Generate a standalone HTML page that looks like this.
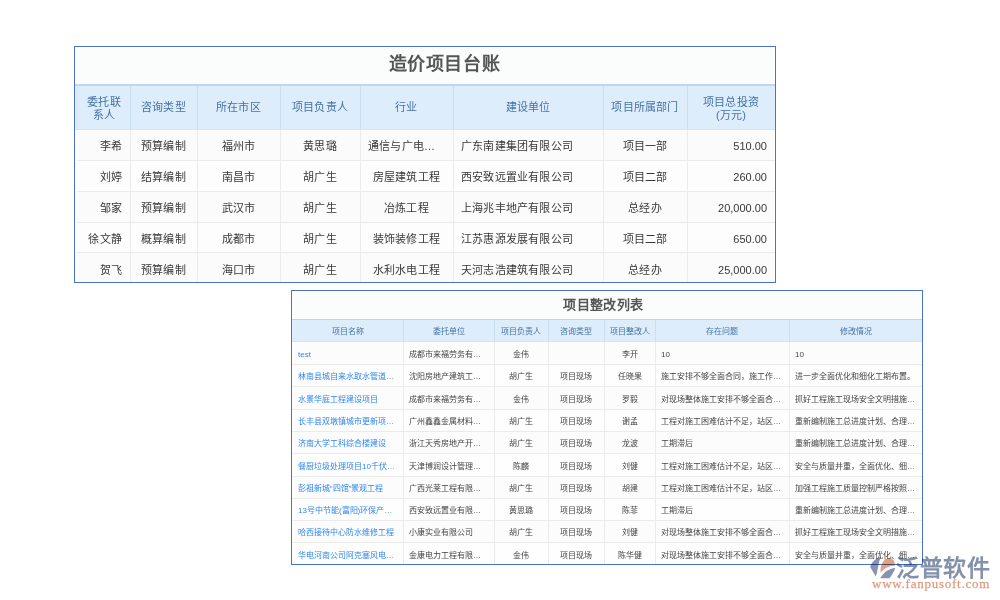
<!DOCTYPE html>
<html lang="zh-CN"><head><meta charset="utf-8"><style>
html,body{margin:0;padding:0;background:#ffffff;width:1000px;height:600px;overflow:hidden;position:relative}
body div{position:absolute}
.t{font-family:"Liberation Sans",sans-serif;white-space:nowrap;overflow:hidden}
</style></head><body>
<div style="left:74px;top:46px;width:702px;height:237px;background:#4a72c8;"></div>
<div style="left:75px;top:47px;width:700px;height:235px;background:#ffffff;"></div>
<div style="left:76px;top:48px;width:698px;height:36px;background:#fbfcfc;"></div>
<div style="left:75px;top:84px;width:700px;height:2px;background:#bcd9f0;"></div>
<div style="left:75px;top:86px;width:700px;height:43px;background:#deedfb;"></div>
<div style="left:75px;top:129px;width:700px;height:1px;background:#d3e4f2;"></div>
<div style="left:76px;top:131px;width:698px;height:29px;background:#fbfbfb;"></div>
<div style="left:76px;top:161px;width:698px;height:30px;background:#fdfdfd;"></div>
<div style="left:76px;top:192px;width:698px;height:30px;background:#fbfbfb;"></div>
<div style="left:76px;top:223px;width:698px;height:29px;background:#fdfdfd;"></div>
<div style="left:76px;top:253px;width:698px;height:29px;background:#fbfbfb;"></div>
<div style="left:75px;top:160px;width:700px;height:1px;background:#ebebeb;"></div>
<div style="left:75px;top:191px;width:700px;height:1px;background:#ebebeb;"></div>
<div style="left:75px;top:222px;width:700px;height:1px;background:#ebebeb;"></div>
<div style="left:75px;top:252px;width:700px;height:1px;background:#ebebeb;"></div>
<div style="left:77px;top:86px;width:1px;height:43px;background:#d3e6f6;"></div>
<div style="left:75px;top:130px;width:2px;height:152px;background:#ffffff;"></div>
<div style="left:130px;top:86px;width:1px;height:43px;background:#c9dff0;"></div>
<div style="left:130px;top:130px;width:1px;height:152px;background:#ebebeb;"></div>
<div style="left:197px;top:86px;width:1px;height:43px;background:#c9dff0;"></div>
<div style="left:197px;top:130px;width:1px;height:152px;background:#ebebeb;"></div>
<div style="left:280px;top:86px;width:1px;height:43px;background:#c9dff0;"></div>
<div style="left:280px;top:130px;width:1px;height:152px;background:#ebebeb;"></div>
<div style="left:360px;top:86px;width:1px;height:43px;background:#c9dff0;"></div>
<div style="left:360px;top:130px;width:1px;height:152px;background:#ebebeb;"></div>
<div style="left:453px;top:86px;width:1px;height:43px;background:#c9dff0;"></div>
<div style="left:453px;top:130px;width:1px;height:152px;background:#ebebeb;"></div>
<div style="left:603px;top:86px;width:1px;height:43px;background:#c9dff0;"></div>
<div style="left:603px;top:130px;width:1px;height:152px;background:#ebebeb;"></div>
<div style="left:687px;top:86px;width:1px;height:43px;background:#c9dff0;"></div>
<div style="left:687px;top:130px;width:1px;height:152px;background:#ebebeb;"></div>
<div class="t" style="left:74px;top:46px;width:701px;height:36px;line-height:36px;font-size:18px;color:#555555;text-align:center;font-weight:bold;padding-left:40px;box-sizing:border-box;letter-spacing:0.6px;">造价项目台账</div>
<div class="t" style="left:78px;top:86px;width:52px;height:43px;font-size:11px;color:#4572a4;text-align:center;line-height:13.5px;padding-top:9.5px;letter-spacing:0.2px;box-sizing:border-box;white-space:normal">委托联<br>系人</div>
<div class="t" style="left:130px;top:86px;width:67px;height:43px;line-height:43px;font-size:11px;color:#4572a4;text-align:center;font-weight:normal;letter-spacing:0.2px;">咨询类型</div>
<div class="t" style="left:197px;top:86px;width:83px;height:43px;line-height:43px;font-size:11px;color:#4572a4;text-align:center;font-weight:normal;letter-spacing:0.2px;">所在市区</div>
<div class="t" style="left:280px;top:86px;width:80px;height:43px;line-height:43px;font-size:11px;color:#4572a4;text-align:center;font-weight:normal;letter-spacing:0.2px;">项目负责人</div>
<div class="t" style="left:360px;top:86px;width:93px;height:43px;line-height:43px;font-size:11px;color:#4572a4;text-align:center;font-weight:normal;letter-spacing:0.2px;">行业</div>
<div class="t" style="left:453px;top:86px;width:150px;height:43px;line-height:43px;font-size:11px;color:#4572a4;text-align:center;font-weight:normal;letter-spacing:0.2px;">建设单位</div>
<div class="t" style="left:603px;top:86px;width:84px;height:43px;line-height:43px;font-size:11px;color:#4572a4;text-align:center;font-weight:normal;letter-spacing:0.2px;">项目所属部门</div>
<div class="t" style="left:687px;top:86px;width:88px;height:43px;font-size:11px;color:#4572a4;text-align:center;line-height:13.5px;padding-top:9.5px;letter-spacing:0.2px;box-sizing:border-box;white-space:normal">项目总投资<br>(万元)</div>
<div class="t" style="left:75px;top:131px;width:55px;height:31px;line-height:31px;font-size:11px;color:#383838;text-align:right;font-weight:normal;padding:0 8px;box-sizing:border-box;letter-spacing:0.2px;">李希</div>
<div class="t" style="left:130px;top:131px;width:67px;height:31px;line-height:31px;font-size:11px;color:#383838;text-align:center;font-weight:normal;padding:0 8px;box-sizing:border-box;letter-spacing:0.2px;">预算编制</div>
<div class="t" style="left:197px;top:131px;width:83px;height:31px;line-height:31px;font-size:11px;color:#383838;text-align:center;font-weight:normal;padding:0 8px;box-sizing:border-box;letter-spacing:0.2px;">福州市</div>
<div class="t" style="left:280px;top:131px;width:80px;height:31px;line-height:31px;font-size:11px;color:#383838;text-align:center;font-weight:normal;padding:0 8px;box-sizing:border-box;letter-spacing:0.2px;">黄思璐</div>
<div class="t" style="left:360px;top:131px;width:93px;height:31px;line-height:31px;font-size:11px;color:#383838;text-align:left;font-weight:normal;padding:0 8px;box-sizing:border-box;letter-spacing:0.2px;">通信与广电…</div>
<div class="t" style="left:453px;top:131px;width:150px;height:31px;line-height:31px;font-size:11px;color:#383838;text-align:left;font-weight:normal;padding:0 8px;box-sizing:border-box;letter-spacing:0.2px;">广东南建集团有限公司</div>
<div class="t" style="left:603px;top:131px;width:84px;height:31px;line-height:31px;font-size:11px;color:#383838;text-align:center;font-weight:normal;padding:0 8px;box-sizing:border-box;letter-spacing:0.2px;">项目一部</div>
<div class="t" style="left:687px;top:131px;width:88px;height:31px;line-height:31px;font-size:11px;color:#383838;text-align:right;font-weight:normal;padding:0 8px;box-sizing:border-box;">510.00</div>
<div class="t" style="left:75px;top:162px;width:55px;height:31px;line-height:31px;font-size:11px;color:#383838;text-align:right;font-weight:normal;padding:0 8px;box-sizing:border-box;letter-spacing:0.2px;">刘婷</div>
<div class="t" style="left:130px;top:162px;width:67px;height:31px;line-height:31px;font-size:11px;color:#383838;text-align:center;font-weight:normal;padding:0 8px;box-sizing:border-box;letter-spacing:0.2px;">结算编制</div>
<div class="t" style="left:197px;top:162px;width:83px;height:31px;line-height:31px;font-size:11px;color:#383838;text-align:center;font-weight:normal;padding:0 8px;box-sizing:border-box;letter-spacing:0.2px;">南昌市</div>
<div class="t" style="left:280px;top:162px;width:80px;height:31px;line-height:31px;font-size:11px;color:#383838;text-align:center;font-weight:normal;padding:0 8px;box-sizing:border-box;letter-spacing:0.2px;">胡广生</div>
<div class="t" style="left:360px;top:162px;width:93px;height:31px;line-height:31px;font-size:11px;color:#383838;text-align:center;font-weight:normal;padding:0 8px;box-sizing:border-box;letter-spacing:0.2px;">房屋建筑工程</div>
<div class="t" style="left:453px;top:162px;width:150px;height:31px;line-height:31px;font-size:11px;color:#383838;text-align:left;font-weight:normal;padding:0 8px;box-sizing:border-box;letter-spacing:0.2px;">西安致远置业有限公司</div>
<div class="t" style="left:603px;top:162px;width:84px;height:31px;line-height:31px;font-size:11px;color:#383838;text-align:center;font-weight:normal;padding:0 8px;box-sizing:border-box;letter-spacing:0.2px;">项目二部</div>
<div class="t" style="left:687px;top:162px;width:88px;height:31px;line-height:31px;font-size:11px;color:#383838;text-align:right;font-weight:normal;padding:0 8px;box-sizing:border-box;">260.00</div>
<div class="t" style="left:75px;top:193px;width:55px;height:31px;line-height:31px;font-size:11px;color:#383838;text-align:right;font-weight:normal;padding:0 8px;box-sizing:border-box;letter-spacing:0.2px;">邹家</div>
<div class="t" style="left:130px;top:193px;width:67px;height:31px;line-height:31px;font-size:11px;color:#383838;text-align:center;font-weight:normal;padding:0 8px;box-sizing:border-box;letter-spacing:0.2px;">预算编制</div>
<div class="t" style="left:197px;top:193px;width:83px;height:31px;line-height:31px;font-size:11px;color:#383838;text-align:center;font-weight:normal;padding:0 8px;box-sizing:border-box;letter-spacing:0.2px;">武汉市</div>
<div class="t" style="left:280px;top:193px;width:80px;height:31px;line-height:31px;font-size:11px;color:#383838;text-align:center;font-weight:normal;padding:0 8px;box-sizing:border-box;letter-spacing:0.2px;">胡广生</div>
<div class="t" style="left:360px;top:193px;width:93px;height:31px;line-height:31px;font-size:11px;color:#383838;text-align:center;font-weight:normal;padding:0 8px;box-sizing:border-box;letter-spacing:0.2px;">冶炼工程</div>
<div class="t" style="left:453px;top:193px;width:150px;height:31px;line-height:31px;font-size:11px;color:#383838;text-align:left;font-weight:normal;padding:0 8px;box-sizing:border-box;letter-spacing:0.2px;">上海兆丰地产有限公司</div>
<div class="t" style="left:603px;top:193px;width:84px;height:31px;line-height:31px;font-size:11px;color:#383838;text-align:center;font-weight:normal;padding:0 8px;box-sizing:border-box;letter-spacing:0.2px;">总经办</div>
<div class="t" style="left:687px;top:193px;width:88px;height:31px;line-height:31px;font-size:11px;color:#383838;text-align:right;font-weight:normal;padding:0 8px;box-sizing:border-box;">20,000.00</div>
<div class="t" style="left:75px;top:224px;width:55px;height:31px;line-height:31px;font-size:11px;color:#383838;text-align:right;font-weight:normal;padding:0 8px;box-sizing:border-box;letter-spacing:0.2px;">徐文静</div>
<div class="t" style="left:130px;top:224px;width:67px;height:31px;line-height:31px;font-size:11px;color:#383838;text-align:center;font-weight:normal;padding:0 8px;box-sizing:border-box;letter-spacing:0.2px;">概算编制</div>
<div class="t" style="left:197px;top:224px;width:83px;height:31px;line-height:31px;font-size:11px;color:#383838;text-align:center;font-weight:normal;padding:0 8px;box-sizing:border-box;letter-spacing:0.2px;">成都市</div>
<div class="t" style="left:280px;top:224px;width:80px;height:31px;line-height:31px;font-size:11px;color:#383838;text-align:center;font-weight:normal;padding:0 8px;box-sizing:border-box;letter-spacing:0.2px;">胡广生</div>
<div class="t" style="left:360px;top:224px;width:93px;height:31px;line-height:31px;font-size:11px;color:#383838;text-align:center;font-weight:normal;padding:0 8px;box-sizing:border-box;letter-spacing:0.2px;">装饰装修工程</div>
<div class="t" style="left:453px;top:224px;width:150px;height:31px;line-height:31px;font-size:11px;color:#383838;text-align:left;font-weight:normal;padding:0 8px;box-sizing:border-box;letter-spacing:0.2px;">江苏惠源发展有限公司</div>
<div class="t" style="left:603px;top:224px;width:84px;height:31px;line-height:31px;font-size:11px;color:#383838;text-align:center;font-weight:normal;padding:0 8px;box-sizing:border-box;letter-spacing:0.2px;">项目二部</div>
<div class="t" style="left:687px;top:224px;width:88px;height:31px;line-height:31px;font-size:11px;color:#383838;text-align:right;font-weight:normal;padding:0 8px;box-sizing:border-box;">650.00</div>
<div class="t" style="left:75px;top:255px;width:55px;height:31px;line-height:31px;font-size:11px;color:#383838;text-align:right;font-weight:normal;padding:0 8px;box-sizing:border-box;letter-spacing:0.2px;">贺飞</div>
<div class="t" style="left:130px;top:255px;width:67px;height:31px;line-height:31px;font-size:11px;color:#383838;text-align:center;font-weight:normal;padding:0 8px;box-sizing:border-box;letter-spacing:0.2px;">预算编制</div>
<div class="t" style="left:197px;top:255px;width:83px;height:31px;line-height:31px;font-size:11px;color:#383838;text-align:center;font-weight:normal;padding:0 8px;box-sizing:border-box;letter-spacing:0.2px;">海口市</div>
<div class="t" style="left:280px;top:255px;width:80px;height:31px;line-height:31px;font-size:11px;color:#383838;text-align:center;font-weight:normal;padding:0 8px;box-sizing:border-box;letter-spacing:0.2px;">胡广生</div>
<div class="t" style="left:360px;top:255px;width:93px;height:31px;line-height:31px;font-size:11px;color:#383838;text-align:center;font-weight:normal;padding:0 8px;box-sizing:border-box;letter-spacing:0.2px;">水利水电工程</div>
<div class="t" style="left:453px;top:255px;width:150px;height:31px;line-height:31px;font-size:11px;color:#383838;text-align:left;font-weight:normal;padding:0 8px;box-sizing:border-box;letter-spacing:0.2px;">天河志浩建筑有限公司</div>
<div class="t" style="left:603px;top:255px;width:84px;height:31px;line-height:31px;font-size:11px;color:#383838;text-align:center;font-weight:normal;padding:0 8px;box-sizing:border-box;letter-spacing:0.2px;">总经办</div>
<div class="t" style="left:687px;top:255px;width:88px;height:31px;line-height:31px;font-size:11px;color:#383838;text-align:right;font-weight:normal;padding:0 8px;box-sizing:border-box;">25,000.00</div>
<div style="left:291px;top:290px;width:632px;height:275px;background:#4a72c8;"></div>
<div style="left:292px;top:291px;width:630px;height:273px;background:#ffffff;"></div>
<div style="left:293px;top:292px;width:628px;height:26px;background:#fbfcfc;"></div>
<div style="left:292px;top:319px;width:630px;height:1px;background:#b8d7f0;"></div>
<div style="left:292px;top:320px;width:630px;height:21px;background:#deedfb;"></div>
<div style="left:292px;top:341px;width:630px;height:1px;background:#d3e4f2;"></div>
<div style="left:293px;top:342px;width:628px;height:22px;background:#fcfcfc;"></div>
<div style="left:293px;top:365px;width:628px;height:21px;background:#fefefe;"></div>
<div style="left:293px;top:387px;width:628px;height:22px;background:#fcfcfc;"></div>
<div style="left:293px;top:410px;width:628px;height:21px;background:#fefefe;"></div>
<div style="left:293px;top:432px;width:628px;height:21px;background:#fcfcfc;"></div>
<div style="left:293px;top:454px;width:628px;height:22px;background:#fefefe;"></div>
<div style="left:293px;top:477px;width:628px;height:21px;background:#fcfcfc;"></div>
<div style="left:293px;top:499px;width:628px;height:21px;background:#fefefe;"></div>
<div style="left:293px;top:521px;width:628px;height:21px;background:#fcfcfc;"></div>
<div style="left:293px;top:543px;width:628px;height:21px;background:#fefefe;"></div>
<div style="left:292px;top:364px;width:630px;height:1px;background:#ebebeb;"></div>
<div style="left:292px;top:386px;width:630px;height:1px;background:#ebebeb;"></div>
<div style="left:292px;top:409px;width:630px;height:1px;background:#ebebeb;"></div>
<div style="left:292px;top:431px;width:630px;height:1px;background:#ebebeb;"></div>
<div style="left:292px;top:453px;width:630px;height:1px;background:#ebebeb;"></div>
<div style="left:292px;top:476px;width:630px;height:1px;background:#ebebeb;"></div>
<div style="left:292px;top:498px;width:630px;height:1px;background:#ebebeb;"></div>
<div style="left:292px;top:520px;width:630px;height:1px;background:#ebebeb;"></div>
<div style="left:292px;top:542px;width:630px;height:1px;background:#ebebeb;"></div>
<div style="left:403px;top:320px;width:1px;height:21px;background:#c9dff0;"></div>
<div style="left:403px;top:342px;width:1px;height:222px;background:#ebebeb;"></div>
<div style="left:494px;top:320px;width:1px;height:21px;background:#c9dff0;"></div>
<div style="left:494px;top:342px;width:1px;height:222px;background:#ebebeb;"></div>
<div style="left:548px;top:320px;width:1px;height:21px;background:#c9dff0;"></div>
<div style="left:548px;top:342px;width:1px;height:222px;background:#ebebeb;"></div>
<div style="left:604px;top:320px;width:1px;height:21px;background:#c9dff0;"></div>
<div style="left:604px;top:342px;width:1px;height:222px;background:#ebebeb;"></div>
<div style="left:655px;top:320px;width:1px;height:21px;background:#c9dff0;"></div>
<div style="left:655px;top:342px;width:1px;height:222px;background:#ebebeb;"></div>
<div style="left:789px;top:320px;width:1px;height:21px;background:#c9dff0;"></div>
<div style="left:789px;top:342px;width:1px;height:222px;background:#ebebeb;"></div>
<div class="t" style="left:288px;top:291px;width:631px;height:28px;line-height:28px;font-size:13px;color:#555555;text-align:center;font-weight:bold;letter-spacing:0.4px;">项目整改列表</div>
<div class="t" style="left:292px;top:321px;width:111px;height:21px;line-height:21px;font-size:8px;color:#4572a4;text-align:center;font-weight:normal;">项目名称</div>
<div class="t" style="left:403px;top:321px;width:91px;height:21px;line-height:21px;font-size:8px;color:#4572a4;text-align:center;font-weight:normal;">委托单位</div>
<div class="t" style="left:494px;top:321px;width:54px;height:21px;line-height:21px;font-size:8px;color:#4572a4;text-align:center;font-weight:normal;">项目负责人</div>
<div class="t" style="left:548px;top:321px;width:56px;height:21px;line-height:21px;font-size:8px;color:#4572a4;text-align:center;font-weight:normal;">咨询类型</div>
<div class="t" style="left:604px;top:321px;width:51px;height:21px;line-height:21px;font-size:8px;color:#4572a4;text-align:center;font-weight:normal;">项目整改人</div>
<div class="t" style="left:655px;top:321px;width:134px;height:21px;line-height:21px;font-size:8px;color:#4572a4;text-align:center;font-weight:normal;">存在问题</div>
<div class="t" style="left:789px;top:321px;width:133px;height:21px;line-height:21px;font-size:8px;color:#4572a4;text-align:center;font-weight:normal;">修改情况</div>
<div class="t" style="left:292px;top:344.0px;width:111px;height:22px;line-height:22px;font-size:8px;color:#2f87ee;text-align:left;font-weight:normal;padding:0 5px 0 6px;box-sizing:border-box;padding-left:6px;">test</div>
<div class="t" style="left:403px;top:344.0px;width:91px;height:22px;line-height:22px;font-size:8px;color:#444444;text-align:left;font-weight:normal;padding:0 5px 0 6px;box-sizing:border-box;">成都市来福劳务有…</div>
<div class="t" style="left:494px;top:344.0px;width:54px;height:22px;line-height:22px;font-size:8px;color:#444444;text-align:center;font-weight:normal;">金伟</div>
<div class="t" style="left:548px;top:344.0px;width:56px;height:22px;line-height:22px;font-size:8px;color:#444444;text-align:center;font-weight:normal;"></div>
<div class="t" style="left:604px;top:344.0px;width:51px;height:22px;line-height:22px;font-size:8px;color:#444444;text-align:center;font-weight:normal;">李开</div>
<div class="t" style="left:655px;top:344.0px;width:134px;height:22px;line-height:22px;font-size:8px;color:#444444;text-align:left;font-weight:normal;padding:0 5px 0 6px;box-sizing:border-box;">10</div>
<div class="t" style="left:789px;top:344.0px;width:133px;height:22px;line-height:22px;font-size:8px;color:#444444;text-align:left;font-weight:normal;padding:0 5px 0 6px;box-sizing:border-box;">10</div>
<div class="t" style="left:292px;top:366.3px;width:111px;height:22px;line-height:22px;font-size:8px;color:#2f87ee;text-align:left;font-weight:normal;padding:0 5px 0 6px;box-sizing:border-box;padding-left:6px;">林南县城自来水取水管道…</div>
<div class="t" style="left:403px;top:366.3px;width:91px;height:22px;line-height:22px;font-size:8px;color:#444444;text-align:left;font-weight:normal;padding:0 5px 0 6px;box-sizing:border-box;">沈阳房地产建筑工…</div>
<div class="t" style="left:494px;top:366.3px;width:54px;height:22px;line-height:22px;font-size:8px;color:#444444;text-align:center;font-weight:normal;">胡广生</div>
<div class="t" style="left:548px;top:366.3px;width:56px;height:22px;line-height:22px;font-size:8px;color:#444444;text-align:center;font-weight:normal;">项目现场</div>
<div class="t" style="left:604px;top:366.3px;width:51px;height:22px;line-height:22px;font-size:8px;color:#444444;text-align:center;font-weight:normal;">任晓果</div>
<div class="t" style="left:655px;top:366.3px;width:134px;height:22px;line-height:22px;font-size:8px;color:#444444;text-align:left;font-weight:normal;padding:0 5px 0 6px;box-sizing:border-box;">施工安排不够全面合同，施工作…</div>
<div class="t" style="left:789px;top:366.3px;width:133px;height:22px;line-height:22px;font-size:8px;color:#444444;text-align:left;font-weight:normal;padding:0 5px 0 6px;box-sizing:border-box;">进一步全面优化和细化工期布置。</div>
<div class="t" style="left:292px;top:388.6px;width:111px;height:22px;line-height:22px;font-size:8px;color:#2f87ee;text-align:left;font-weight:normal;padding:0 5px 0 6px;box-sizing:border-box;padding-left:6px;">水景华庭工程建设项目</div>
<div class="t" style="left:403px;top:388.6px;width:91px;height:22px;line-height:22px;font-size:8px;color:#444444;text-align:left;font-weight:normal;padding:0 5px 0 6px;box-sizing:border-box;">成都市来福劳务有…</div>
<div class="t" style="left:494px;top:388.6px;width:54px;height:22px;line-height:22px;font-size:8px;color:#444444;text-align:center;font-weight:normal;">金伟</div>
<div class="t" style="left:548px;top:388.6px;width:56px;height:22px;line-height:22px;font-size:8px;color:#444444;text-align:center;font-weight:normal;">项目现场</div>
<div class="t" style="left:604px;top:388.6px;width:51px;height:22px;line-height:22px;font-size:8px;color:#444444;text-align:center;font-weight:normal;">罗毅</div>
<div class="t" style="left:655px;top:388.6px;width:134px;height:22px;line-height:22px;font-size:8px;color:#444444;text-align:left;font-weight:normal;padding:0 5px 0 6px;box-sizing:border-box;">对现场整体施工安排不够全面合…</div>
<div class="t" style="left:789px;top:388.6px;width:133px;height:22px;line-height:22px;font-size:8px;color:#444444;text-align:left;font-weight:normal;padding:0 5px 0 6px;box-sizing:border-box;">抓好工程施工现场安全文明措施…</div>
<div class="t" style="left:292px;top:410.9px;width:111px;height:22px;line-height:22px;font-size:8px;color:#2f87ee;text-align:left;font-weight:normal;padding:0 5px 0 6px;box-sizing:border-box;padding-left:6px;">长丰县双墩镇城市更新项…</div>
<div class="t" style="left:403px;top:410.9px;width:91px;height:22px;line-height:22px;font-size:8px;color:#444444;text-align:left;font-weight:normal;padding:0 5px 0 6px;box-sizing:border-box;">广州鑫鑫金属材料…</div>
<div class="t" style="left:494px;top:410.9px;width:54px;height:22px;line-height:22px;font-size:8px;color:#444444;text-align:center;font-weight:normal;">胡广生</div>
<div class="t" style="left:548px;top:410.9px;width:56px;height:22px;line-height:22px;font-size:8px;color:#444444;text-align:center;font-weight:normal;">项目现场</div>
<div class="t" style="left:604px;top:410.9px;width:51px;height:22px;line-height:22px;font-size:8px;color:#444444;text-align:center;font-weight:normal;">谢孟</div>
<div class="t" style="left:655px;top:410.9px;width:134px;height:22px;line-height:22px;font-size:8px;color:#444444;text-align:left;font-weight:normal;padding:0 5px 0 6px;box-sizing:border-box;">工程对施工困难估计不足，站区…</div>
<div class="t" style="left:789px;top:410.9px;width:133px;height:22px;line-height:22px;font-size:8px;color:#444444;text-align:left;font-weight:normal;padding:0 5px 0 6px;box-sizing:border-box;">重新编制施工总进度计划、合理…</div>
<div class="t" style="left:292px;top:433.2px;width:111px;height:22px;line-height:22px;font-size:8px;color:#2f87ee;text-align:left;font-weight:normal;padding:0 5px 0 6px;box-sizing:border-box;padding-left:6px;">济南大学工科综合楼建设</div>
<div class="t" style="left:403px;top:433.2px;width:91px;height:22px;line-height:22px;font-size:8px;color:#444444;text-align:left;font-weight:normal;padding:0 5px 0 6px;box-sizing:border-box;">浙江天秀房地产开…</div>
<div class="t" style="left:494px;top:433.2px;width:54px;height:22px;line-height:22px;font-size:8px;color:#444444;text-align:center;font-weight:normal;">胡广生</div>
<div class="t" style="left:548px;top:433.2px;width:56px;height:22px;line-height:22px;font-size:8px;color:#444444;text-align:center;font-weight:normal;">项目现场</div>
<div class="t" style="left:604px;top:433.2px;width:51px;height:22px;line-height:22px;font-size:8px;color:#444444;text-align:center;font-weight:normal;">龙波</div>
<div class="t" style="left:655px;top:433.2px;width:134px;height:22px;line-height:22px;font-size:8px;color:#444444;text-align:left;font-weight:normal;padding:0 5px 0 6px;box-sizing:border-box;">工期滞后</div>
<div class="t" style="left:789px;top:433.2px;width:133px;height:22px;line-height:22px;font-size:8px;color:#444444;text-align:left;font-weight:normal;padding:0 5px 0 6px;box-sizing:border-box;">重新编制施工总进度计划、合理…</div>
<div class="t" style="left:292px;top:455.5px;width:111px;height:22px;line-height:22px;font-size:8px;color:#2f87ee;text-align:left;font-weight:normal;padding:0 5px 0 6px;box-sizing:border-box;padding-left:6px;">餐厨垃圾处理项目10千伏…</div>
<div class="t" style="left:403px;top:455.5px;width:91px;height:22px;line-height:22px;font-size:8px;color:#444444;text-align:left;font-weight:normal;padding:0 5px 0 6px;box-sizing:border-box;">天津博润设计管理…</div>
<div class="t" style="left:494px;top:455.5px;width:54px;height:22px;line-height:22px;font-size:8px;color:#444444;text-align:center;font-weight:normal;">陈麟</div>
<div class="t" style="left:548px;top:455.5px;width:56px;height:22px;line-height:22px;font-size:8px;color:#444444;text-align:center;font-weight:normal;">项目现场</div>
<div class="t" style="left:604px;top:455.5px;width:51px;height:22px;line-height:22px;font-size:8px;color:#444444;text-align:center;font-weight:normal;">刘健</div>
<div class="t" style="left:655px;top:455.5px;width:134px;height:22px;line-height:22px;font-size:8px;color:#444444;text-align:left;font-weight:normal;padding:0 5px 0 6px;box-sizing:border-box;">工程对施工困难估计不足，站区…</div>
<div class="t" style="left:789px;top:455.5px;width:133px;height:22px;line-height:22px;font-size:8px;color:#444444;text-align:left;font-weight:normal;padding:0 5px 0 6px;box-sizing:border-box;">安全与质量并重，全面优化、细…</div>
<div class="t" style="left:292px;top:477.8px;width:111px;height:22px;line-height:22px;font-size:8px;color:#2f87ee;text-align:left;font-weight:normal;padding:0 5px 0 6px;box-sizing:border-box;padding-left:6px;">彭祖新城“四馆”景观工程</div>
<div class="t" style="left:403px;top:477.8px;width:91px;height:22px;line-height:22px;font-size:8px;color:#444444;text-align:left;font-weight:normal;padding:0 5px 0 6px;box-sizing:border-box;">广西光莱工程有限…</div>
<div class="t" style="left:494px;top:477.8px;width:54px;height:22px;line-height:22px;font-size:8px;color:#444444;text-align:center;font-weight:normal;">胡广生</div>
<div class="t" style="left:548px;top:477.8px;width:56px;height:22px;line-height:22px;font-size:8px;color:#444444;text-align:center;font-weight:normal;">项目现场</div>
<div class="t" style="left:604px;top:477.8px;width:51px;height:22px;line-height:22px;font-size:8px;color:#444444;text-align:center;font-weight:normal;">胡建</div>
<div class="t" style="left:655px;top:477.8px;width:134px;height:22px;line-height:22px;font-size:8px;color:#444444;text-align:left;font-weight:normal;padding:0 5px 0 6px;box-sizing:border-box;">工程对施工困难估计不足，站区…</div>
<div class="t" style="left:789px;top:477.8px;width:133px;height:22px;line-height:22px;font-size:8px;color:#444444;text-align:left;font-weight:normal;padding:0 5px 0 6px;box-sizing:border-box;">加强工程施工质量控制严格按照…</div>
<div class="t" style="left:292px;top:500.1px;width:111px;height:22px;line-height:22px;font-size:8px;color:#2f87ee;text-align:left;font-weight:normal;padding:0 5px 0 6px;box-sizing:border-box;padding-left:6px;">13号中节能(富阳)环保产…</div>
<div class="t" style="left:403px;top:500.1px;width:91px;height:22px;line-height:22px;font-size:8px;color:#444444;text-align:left;font-weight:normal;padding:0 5px 0 6px;box-sizing:border-box;">西安致远置业有限…</div>
<div class="t" style="left:494px;top:500.1px;width:54px;height:22px;line-height:22px;font-size:8px;color:#444444;text-align:center;font-weight:normal;">黄思璐</div>
<div class="t" style="left:548px;top:500.1px;width:56px;height:22px;line-height:22px;font-size:8px;color:#444444;text-align:center;font-weight:normal;">项目现场</div>
<div class="t" style="left:604px;top:500.1px;width:51px;height:22px;line-height:22px;font-size:8px;color:#444444;text-align:center;font-weight:normal;">陈菲</div>
<div class="t" style="left:655px;top:500.1px;width:134px;height:22px;line-height:22px;font-size:8px;color:#444444;text-align:left;font-weight:normal;padding:0 5px 0 6px;box-sizing:border-box;">工期滞后</div>
<div class="t" style="left:789px;top:500.1px;width:133px;height:22px;line-height:22px;font-size:8px;color:#444444;text-align:left;font-weight:normal;padding:0 5px 0 6px;box-sizing:border-box;">重新编制施工总进度计划、合理…</div>
<div class="t" style="left:292px;top:522.4px;width:111px;height:22px;line-height:22px;font-size:8px;color:#2f87ee;text-align:left;font-weight:normal;padding:0 5px 0 6px;box-sizing:border-box;padding-left:6px;">哈西接待中心防水维修工程</div>
<div class="t" style="left:403px;top:522.4px;width:91px;height:22px;line-height:22px;font-size:8px;color:#444444;text-align:left;font-weight:normal;padding:0 5px 0 6px;box-sizing:border-box;">小康实业有限公司</div>
<div class="t" style="left:494px;top:522.4px;width:54px;height:22px;line-height:22px;font-size:8px;color:#444444;text-align:center;font-weight:normal;">胡广生</div>
<div class="t" style="left:548px;top:522.4px;width:56px;height:22px;line-height:22px;font-size:8px;color:#444444;text-align:center;font-weight:normal;">项目现场</div>
<div class="t" style="left:604px;top:522.4px;width:51px;height:22px;line-height:22px;font-size:8px;color:#444444;text-align:center;font-weight:normal;">刘健</div>
<div class="t" style="left:655px;top:522.4px;width:134px;height:22px;line-height:22px;font-size:8px;color:#444444;text-align:left;font-weight:normal;padding:0 5px 0 6px;box-sizing:border-box;">对现场整体施工安排不够全面合…</div>
<div class="t" style="left:789px;top:522.4px;width:133px;height:22px;line-height:22px;font-size:8px;color:#444444;text-align:left;font-weight:normal;padding:0 5px 0 6px;box-sizing:border-box;">抓好工程施工现场安全文明措施…</div>
<div class="t" style="left:292px;top:544.7px;width:111px;height:22px;line-height:22px;font-size:8px;color:#2f87ee;text-align:left;font-weight:normal;padding:0 5px 0 6px;box-sizing:border-box;padding-left:6px;">华电河南公司阿克塞风电…</div>
<div class="t" style="left:403px;top:544.7px;width:91px;height:22px;line-height:22px;font-size:8px;color:#444444;text-align:left;font-weight:normal;padding:0 5px 0 6px;box-sizing:border-box;">金康电力工程有限…</div>
<div class="t" style="left:494px;top:544.7px;width:54px;height:22px;line-height:22px;font-size:8px;color:#444444;text-align:center;font-weight:normal;">金伟</div>
<div class="t" style="left:548px;top:544.7px;width:56px;height:22px;line-height:22px;font-size:8px;color:#444444;text-align:center;font-weight:normal;">项目现场</div>
<div class="t" style="left:604px;top:544.7px;width:51px;height:22px;line-height:22px;font-size:8px;color:#444444;text-align:center;font-weight:normal;">陈华健</div>
<div class="t" style="left:655px;top:544.7px;width:134px;height:22px;line-height:22px;font-size:8px;color:#444444;text-align:left;font-weight:normal;padding:0 5px 0 6px;box-sizing:border-box;">对现场整体施工安排不够全面合…</div>
<div class="t" style="left:789px;top:544.7px;width:133px;height:22px;line-height:22px;font-size:8px;color:#444444;text-align:left;font-weight:normal;padding:0 5px 0 6px;box-sizing:border-box;">安全与质量并重，全面优化、细…</div>

<div style="left:866px;top:550px;width:134px;height:50px;mix-blend-mode:multiply">
<svg width="134" height="50" viewBox="0 0 134 50" style="position:absolute;left:0;top:0">
  <path d="M15.2 7.1 C10.5 7.6 5.5 12 4.2 17 L9.8 26.6 C11 23 11.6 19.5 12.4 15 C13 11.5 14 9 15 7.2 Z" fill="#8893af"/>
  <path d="M14.5 22.6 C14 15.5 17.5 8.2 23 8 C26.5 8 28.6 11 29.2 15.4 C23.5 15.6 18 18.2 14.5 22.6 Z" fill="#e5a085"/>
  <path d="M29.3 18 C23 18.6 17.5 22.2 14.2 28.3 L23.5 28.3 C26 25.2 28 21.5 29.3 18 Z" fill="#8893af"/>
</svg>
<div class="t" style="left:30px;top:5px;font-size:23px;line-height:26px;color:#8391ab;letter-spacing:0.7px;font-weight:bold">泛普软件</div>
<div class="t" style="left:6px;top:27px;font-family:'Liberation Serif',serif;font-size:13px;line-height:14px;color:#de9a7d;letter-spacing:0.75px;-webkit-text-stroke:0.25px #de9a7d">www.fanpusoft.com</div>
</div>

</body></html>
